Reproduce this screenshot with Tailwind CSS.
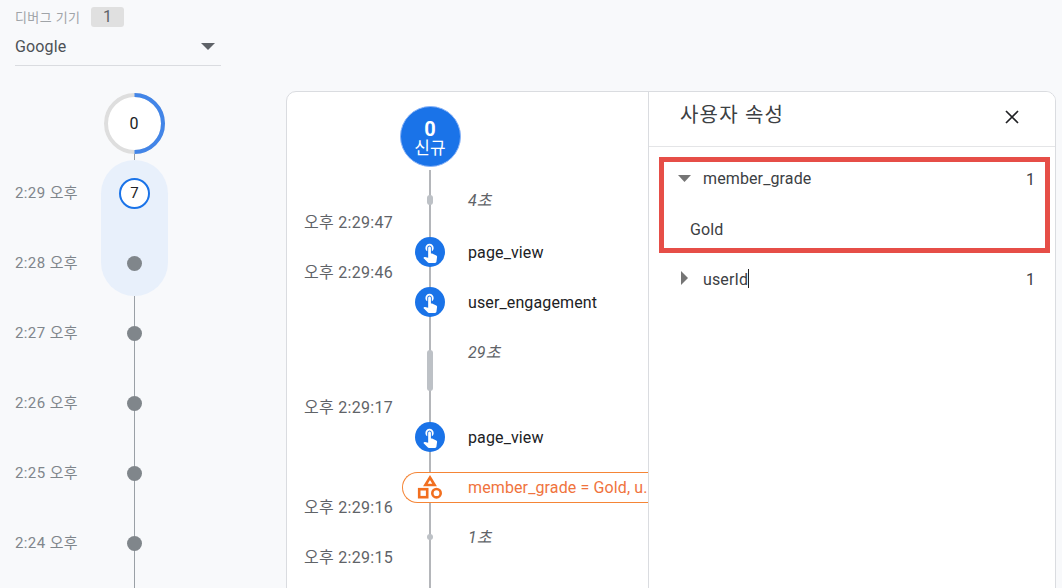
<!DOCTYPE html>
<html lang="ko">
<head>
<meta charset="utf-8">
<script src="https://cdn.jsdelivr.net/npm/@tailwindcss/browser@4"></script>
</head>
<body class="m-0 h-[588px] w-[1062px] overflow-hidden bg-[#f8f9fb] font-['Roboto','Noto_Sans_CJK_KR',sans-serif] text-[16px] leading-5">
<div class="flex h-[588px] overflow-hidden">

  <!-- left: debug device + minute timeline -->
  <aside class="w-[286px] shrink-0">
    <div class="ml-[15px] w-[206px] h-[66px] border-b border-[#dadce0] pt-[7px]">
      <div class="flex items-center h-5">
        <span class="w-[76px] pt-[2px] text-[13px] tracking-[0.4px] text-[#a0a4a8]">디버그 기기</span>
        <span class="flex h-5 w-[33px] items-center justify-center rounded-[3px] bg-[#e0e0e0] text-[#5f6368]">1</span>
      </div>
      <div class="mt-[9px] flex h-5 items-center justify-between pr-[6px] text-[#4d5156]">
        <span class="pt-[2px] tracking-[0.15px]">Google</span>
        <svg width="14" height="7" viewBox="0 0 14 7"><path d="M0 0h14L7 7z" fill="#5f6368"/></svg>
      </div>
    </div>

    <div class="relative mt-[27px] ml-[15px] flex h-[520px]">
      <div class="absolute left-[118.5px] top-[50px] bottom-0 w-px bg-[#9aa0a6]"></div>
      <div class="absolute left-[86px] top-[67px] h-[136px] w-[67px] rounded-full bg-[#e8f0fb]"></div>

      <div class="relative w-[86px] pt-[65px] text-[15px] tracking-[0.4px] text-[#80868b]">
        <div class="flex h-[70px] items-center">2:29 오후</div>
        <div class="flex h-[70px] items-center">2:28 오후</div>
        <div class="flex h-[70px] items-center">2:27 오후</div>
        <div class="flex h-[70px] items-center">2:26 오후</div>
        <div class="flex h-[70px] items-center">2:25 오후</div>
        <div class="flex h-[70px] items-center">2:24 오후</div>
      </div>

      <div class="relative flex w-[67px] flex-col items-center">
        <div class="relative -ml-px flex h-[61px] w-[61px] items-center justify-center rounded-full bg-white">
          <svg class="absolute inset-0" width="61" height="61" viewBox="0 0 61 61">
            <circle cx="30.5" cy="30.5" r="28.5" fill="none" stroke="#dedede" stroke-width="4"/>
            <path d="M30.5 2a28.5 28.5 0 0 1 0 57" fill="none" stroke="#4285e8" stroke-width="4"/>
          </svg>
          <span class="relative text-[#202124]">0</span>
        </div>
        <div class="flex h-[70px] mt-[4px] items-center"><span class="flex h-[31px] w-[31px] items-center justify-center rounded-full border-[2.5px] border-[#1a73e8] bg-white text-[15px] text-[#202124]">7</span></div>
        <div class="flex h-[70px] items-center"><span class="h-[15px] w-[15px] rounded-full bg-[#80868b]"></span></div>
        <div class="flex h-[70px] items-center"><span class="h-[15px] w-[15px] rounded-full bg-[#80868b]"></span></div>
        <div class="flex h-[70px] items-center"><span class="h-[15px] w-[15px] rounded-full bg-[#80868b]"></span></div>
        <div class="flex h-[70px] items-center"><span class="h-[15px] w-[15px] rounded-full bg-[#80868b]"></span></div>
        <div class="flex h-[70px] items-center"><span class="h-[15px] w-[15px] rounded-full bg-[#80868b]"></span></div>
      </div>
    </div>
  </aside>

  <!-- card -->
  <main class="mt-[91px] flex h-[540px] w-[770px] shrink-0 overflow-hidden rounded-t-[10px] border border-[#dadce0] bg-white">

    <!-- event stream -->
    <section class="relative flex w-[361px] shrink-0 overflow-hidden tracking-[0.12px]">
      <div class="absolute left-[142px] top-[78px] bottom-0 w-[2px] bg-[#b4b6ba]"></div>

      <div class="relative ml-[17px] w-[110.5px] shrink-0 text-[16px] tracking-[0.3px] text-[#5f6368]">
        <div class="mt-[121px] h-5">오후 2:29:47</div>
        <div class="mt-[30px] h-5">오후 2:29:46</div>
        <div class="mt-[115px] h-5">오후 2:29:17</div>
        <div class="mt-[80px] h-5">오후 2:29:16</div>
        <div class="mt-[30px] h-5">오후 2:29:15</div>
      </div>

      <div class="relative flex-1">
        <div class="-ml-[15px] mt-[14px] flex h-[61px] w-[61px] flex-col items-center justify-center rounded-full border border-[#8ab4f8] bg-[#1a73e8] pt-[4px] text-white">
          <span class="text-[20px] font-bold leading-[19px]">0</span>
          <span class="text-[17px] leading-[19px]">신규</span>
        </div>

        <div class="mt-[18px] flex h-[30px]">
          <div class="flex w-[30px] items-center justify-center"><span class="h-[10px] w-[6px] rounded-full bg-[#bdc1c6]"></span></div>
          <span class="ml-[23.5px] self-center pt-[2px] italic text-[#5f6368]">4초</span>
        </div>

        <div class="mt-[22px] flex h-[30px] items-center">
          <span class="flex h-[30px] w-[30px] items-center justify-center rounded-full bg-[#1a73e8]">
            <svg width="22" height="22" viewBox="0 0 24 24" fill="#fff"><path d="M9 11.24V7.5C9 6.12 10.12 5 11.5 5S14 6.12 14 7.5v3.74c1.21-.81 2-2.18 2-3.74C16 5.01 13.99 3 11.5 3S7 5.01 7 7.5c0 1.56.79 2.93 2 3.74zm9.84 4.63l-4.54-2.26c-.17-.07-.35-.11-.54-.11H13v-6c0-.83-.67-1.5-1.5-1.5S10 6.67 10 7.5v10.74l-3.43-.72c-.08-.01-.15-.03-.24-.03-.31 0-.59.13-.79.33l-.79.8 4.94 4.94c.27.27.65.44 1.06.44h6.79c.75 0 1.33-.55 1.44-1.28l.75-5.27c.01-.07.02-.14.02-.2 0-.62-.38-1.16-.91-1.38z"/></svg>
          </span>
          <span class="ml-[23.5px] pt-[2px] text-[#202124]">page_view</span>
        </div>

        <div class="mt-[20px] flex h-[30px] items-center">
          <span class="flex h-[30px] w-[30px] items-center justify-center rounded-full bg-[#1a73e8]">
            <svg width="22" height="22" viewBox="0 0 24 24" fill="#fff"><path d="M9 11.24V7.5C9 6.12 10.12 5 11.5 5S14 6.12 14 7.5v3.74c1.21-.81 2-2.18 2-3.74C16 5.01 13.99 3 11.5 3S7 5.01 7 7.5c0 1.56.79 2.93 2 3.74zm9.84 4.63l-4.54-2.26c-.17-.07-.35-.11-.54-.11H13v-6c0-.83-.67-1.5-1.5-1.5S10 6.67 10 7.5v10.74l-3.43-.72c-.08-.01-.15-.03-.24-.03-.31 0-.59.13-.79.33l-.79.8 4.94 4.94c.27.27.65.44 1.06.44h6.79c.75 0 1.33-.55 1.44-1.28l.75-5.27c.01-.07.02-.14.02-.2 0-.62-.38-1.16-.91-1.38z"/></svg>
          </span>
          <span class="ml-[23.5px] pt-[2px] text-[#202124]">user_engagement</span>
        </div>

        <div class="mt-[33px] flex h-[41px]">
          <div class="flex w-[30px] justify-center"><span class="h-[41px] w-[6px] rounded-full bg-[#bdc1c6]"></span></div>
          <span class="ml-[23.5px] -mt-[7px] h-5 italic text-[#5f6368]">29초</span>
        </div>

        <div class="mt-[31px] flex h-[30px] items-center">
          <span class="flex h-[30px] w-[30px] items-center justify-center rounded-full bg-[#1a73e8]">
            <svg width="22" height="22" viewBox="0 0 24 24" fill="#fff"><path d="M9 11.24V7.5C9 6.12 10.12 5 11.5 5S14 6.12 14 7.5v3.74c1.21-.81 2-2.18 2-3.74C16 5.01 13.99 3 11.5 3S7 5.01 7 7.5c0 1.56.79 2.93 2 3.74zm9.84 4.63l-4.54-2.26c-.17-.07-.35-.11-.54-.11H13v-6c0-.83-.67-1.5-1.5-1.5S10 6.67 10 7.5v10.74l-3.43-.72c-.08-.01-.15-.03-.24-.03-.31 0-.59.13-.79.33l-.79.8 4.94 4.94c.27.27.65.44 1.06.44h6.79c.75 0 1.33-.55 1.44-1.28l.75-5.27c.01-.07.02-.14.02-.2 0-.62-.38-1.16-.91-1.38z"/></svg>
          </span>
          <span class="ml-[23.5px] pt-[2px] text-[#202124]">page_view</span>
        </div>

        <div class="-ml-[12.5px] mt-[20px] flex h-[31px] w-[246px] items-center rounded-l-full border-[1.5px] border-r-0 border-[#f58536] bg-white pl-[11.5px]">
          <svg class="shrink-0" width="30" height="30" viewBox="0 0 30 30" fill="none" stroke="#f26f1f" stroke-width="2.6">
            <path d="M15 4.5l4.6 7.5h-9.2z"/>
            <rect x="4.2" y="16.2" width="8" height="8"/>
            <circle cx="21.5" cy="20.2" r="4.2"/>
          </svg>
          <span class="ml-[23.5px] whitespace-nowrap text-[#f0733d]">member_grade = Gold, u..</span>
        </div>

        <div class="mt-[19px] flex h-[30px]">
          <div class="flex w-[30px] items-center justify-center"><span class="h-[6px] w-[6px] rounded-full bg-[#bdc1c6]"></span></div>
          <span class="ml-[23.5px] self-center pt-[2px] italic text-[#5f6368]">1초</span>
        </div>
      </div>
    </section>

    <!-- user properties panel -->
    <section class="relative flex-1 border-l border-[#dadce0] bg-white tracking-[0.12px]">
      <header class="flex h-[55px] items-start justify-between border-b border-[#e4e5e7] pl-[31px] pr-[36px]">
        <h2 class="mt-[9px] h-7 text-[20px] font-normal leading-7 tracking-[1.2px] text-[#3c4043]">사용자 속성</h2>
        <svg class="mt-[18px]" width="14" height="14" viewBox="0 0 14 14" fill="none" stroke="#202124" stroke-width="1.7"><path d="M1 1l12 12M13 1L1 13"/></svg>
      </header>

      <div class="ml-[10px] mt-[10px] h-[96px] w-[391px] border-[5px] border-[#e64e47] text-[#3c4043]">
        <div class="flex h-8 items-center pl-[14px] pr-[10px]">
          <svg class="shrink-0" width="13" height="7" viewBox="0 0 13 7"><path d="M0 0h13L6.5 7z" fill="#757575"/></svg>
          <span class="ml-[12px] flex-1 pt-[2px]">member_grade</span>
          <span class="pt-[4px]">1</span>
        </div>
        <div class="mt-[26px] flex h-5 items-center pl-[26px]">Gold</div>
      </div>

      <div class="ml-[15px] mt-[11px] flex h-8 w-[381px] items-center pl-[17px] pr-[10px] text-[#3c4043]">
        <svg class="-mt-[4px] shrink-0" width="7" height="14" viewBox="0 0 7 14"><path d="M0 0l7 7-7 7z" fill="#757575"/></svg>
        <span class="relative ml-[15px] -mt-[1px]">userId<span class="absolute -right-px -top-px h-[19px] w-px bg-[#202124]"></span></span>
        <span class="ml-auto">1</span>
      </div>
    </section>
  </main>
</div>
</body>
</html>
